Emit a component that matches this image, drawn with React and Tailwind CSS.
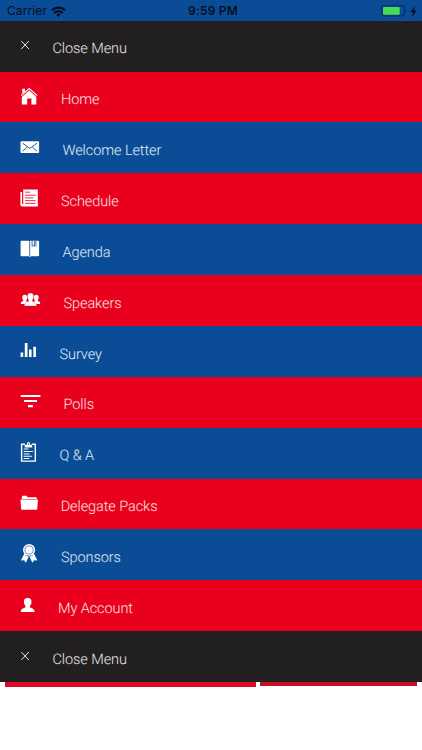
const icons = {
  close: (
    <path d="M1.3 8l7.6 8M8.9 8l-7.6 8" fill="none" stroke="currentColor" strokeWidth="0.9" />
  ),
  home: (
    <>
      <path d="M2.2 4.8h2.9v2.6L2.2 9.8z" />
      <path d="M1.2 11.6L9.2 4.6l8 7" fill="none" stroke="currentColor" strokeWidth="1.2" />
      <path d="M1.8 12.9l7.4-6.4 7.1 6.2v7.8h-4.9v-6H7.2v6H1.8z" />
    </>
  ),
  mail: (
    <>
      <rect x="0.5" y="6.2" width="18.6" height="11.8" rx="0.8" />
      <path d="M2.6 8.2l7.2 5.2L17 8.2M2.6 16.2l4.6-4M17 16.2l-4.6-4" fill="none" stroke="#0a4d96" strokeWidth="0.9" />
    </>
  ),
  schedule: (
    <>
      <path d="M3.2 3.5h14.6v16.9H2.2c-1 0-1.8-.7-1.8-1.7V6h1.7v12h1.1z" />
      <path d="M5 6.2h5.2M5 9.2h10.6M5 11.9h8.4M5 14.6h10.6M5 17.4h10.6" stroke="#e8001c" strokeWidth="0.8" />
    </>
  ),
  agenda: (
    <>
      <path d="M1.5 3.8h7.2l1 .7.9-.7h7.6c.5 0 .9.4.9.9v13.6c0 .5-.4.9-.9.9h-7.4l-1 1-1-1H1.5c-.5 0-.9-.4-.9-.9V4.7c0-.5.4-.9.9-.9z" />
      <path d="M9.7 4.6v14.8M12.1 3.8v5.6l1.3-1.1 1.2 1.1V3.8M15.9 3.8v5.4" fill="none" stroke="#0a4d96" strokeWidth="0.8" />
    </>
  ),
  speakers: (
    <>
      <path d="M4.7 6.8c1.8 0 2.6 1.2 2.5 2.9-.1 1.3-.5 2.1-1 2.6v1l1.2.8-1.3 1.9H.8c0-1.8.4-2.2 2.4-2.9v-.9c-.6-.6-.9-1.4-.9-2.6-.1-1.6.7-2.800 2.400-2.800z" />
      <path d="M16.3 6.8c-1.8 0-2.6 1.2-2.5 2.9.1 1.3.5 2.1 1 2.6v1l-1.2.8 1.3 1.9h5.300c0-1.800-.4-2.200-2.400-2.900v-.9c.6-.6.9-1.400.9-2.600.1-1.600-.7-2.800-2.400-2.800z" />
      <path d="M10.5 5c2.3 0 3.4 1.4 3.2 3.700-.1 1.400-.6 2.400-1.200 3v1.600c2.600.8 4 1.400 4.200 4.700H4.300c.2-3.300 1.600-3.900 4.200-4.700v-1.600c-.6-.6-1.100-1.600-1.200-3-.2-2.300.9-3.700 3.200-3.700z" stroke="#e8001c" strokeWidth="0.3" />
    </>
  ),
  survey: (
    <path d="M0.6 14.5h2.6v4.6H0.6zM4.8 5h2.7v14.1H4.8zM9 11.5h2.6v7.6H9zM13.3 8.8H16v10.3h-2.7z" />
  ),
  polls: (
    <path d="M0.8 6h19.6v2.1H0.8zM4 11h13v2H4zM8 16.1h4.9v2.2H8z" />
  ),
  qa: (
    <>
      <path d="M5.2 4.3H1.6v16.8h13.7V4.3h-3.6" fill="none" stroke="currentColor" strokeWidth="1.4" />
      <path d="M4.7 7.4V5h1.8c.4-.7.6-1 .6-1.5C7.1 2.7 7.7 2 8.5 2s1.4.7 1.4 1.5c0 .5.2.8.6 1.5h1.7v2.4z" />
      <path d="M3.7 9h4.7M3.7 11.5h9.2M3.7 14h5.8M3.7 16.3h8.4M3.7 18.5h5.5" stroke="currentColor" strokeWidth="1.1" />
      <circle cx="8.5" cy="4" r="0.7" fill="#0a4d96" />
    </>
  ),
  folder: (
    <>
      <path d="M1.9 8V5.7c0-.5.4-.9.9-.9h3.7l1.2 1.4h8.2c.5 0 .9.4.9.9V8z" />
      <path d="M0.5 8.6h17.4l-.6 9.2c0 .6-.4 1-1 1H2.1c-.6 0-1-.4-1-1z" />
    </>
  ),
  ribbon: (
    <>
      <path d="M4.3 11.5L0.9 18.5l3.1-.2 1.9 2.5 2.9-6.3zM13.8 11.5l3.6 7-3.2-.2-1.9 2.5-2.9-6.3z" />
      <circle cx="9.1" cy="8" r="6.1" />
      <circle cx="9.1" cy="8" r="4.1" fill="none" stroke="#0a4d96" strokeWidth="0.6" />
      <path d="M5.2 13.1c2.4 1.5 5.4 1.5 7.8 0" fill="none" stroke="#0a4d96" strokeWidth="0.5" />
    </>
  ),
  account: (
    <path d="M7.7 5.1c2.7 0 4 1.5 3.8 4-.1 1.7-.7 3-1.5 3.8v1.5c2.7 1 4.5 1.2 4.6 4.7H.8c.1-3.5 1.9-3.7 4.6-4.7v-1.5c-.8-.8-1.4-2.1-1.5-3.8-.2-2.5 1.1-4 3.8-4z" />
  ),
};

const menuItems = [
  { icon: "close", label: "Close Menu", bg: "bg-[#211f20]", indent: "pl-[8.5px]" },
  { icon: "home", label: "Home", bg: "bg-[#e8001c]", indent: "pl-[17px]" },
  { icon: "mail", label: "Welcome Letter", bg: "bg-[#0a4d96]", indent: "pl-[18.5px]" },
  { icon: "schedule", label: "Schedule", bg: "bg-[#e8001c]", indent: "pl-[17px]" },
  { icon: "agenda", label: "Agenda", bg: "bg-[#0a4d96]", indent: "pl-[18.5px]" },
  { icon: "speakers", label: "Speakers", bg: "bg-[#e8001c]", indent: "pl-[19.5px]" },
  { icon: "survey", label: "Survey", bg: "bg-[#0a4d96]", indent: "pl-[15.5px]" },
  { icon: "polls", label: "Polls", bg: "bg-[#e8001c]", indent: "pl-[19.5px]" },
  { icon: "qa", label: "Q & A", bg: "bg-[#0a4d96]", indent: "pl-[15.5px]" },
  { icon: "folder", label: "Delegate Packs", bg: "bg-[#e8001c]", indent: "pl-[16.7px]" },
  { icon: "ribbon", label: "Sponsors", bg: "bg-[#0a4d96]", indent: "pl-[17px]" },
  { icon: "account", label: "My Account", bg: "bg-[#e8001c]", indent: "pl-[14px]" },
  { icon: "close", label: "Close Menu", bg: "bg-[#211f20]", indent: "pl-[8.5px]" },
];

const StatusBar = () => {
  return (
    <header className="grid h-[20.7px] grid-cols-3 items-center bg-[#0a4d96] pl-[7px] pr-[5px] pt-px font-['Inter',sans-serif] text-[#040d1f]">
      <div className="flex items-center gap-1">
        <span className="text-[12px] leading-5 tracking-[0.1px]">Carrier</span>
        <svg width="15" height="11" viewBox="0 0 15 11" fill="none" stroke="currentColor" strokeWidth="2.2">
          <path d="M1 4.2c3.7-3.5 9.3-3.5 13 0" />
          <path d="M3.3 6.9c2.4-2.2 6-2.2 8.4 0" />
          <path d="M5.3 8.6c1.3-1 3.1-1 4.4 0L7.5 10.9z" fill="currentColor" stroke="none" />
        </svg>
      </div>
      <span className="pl-0.5 text-center text-[12px] font-semibold leading-5 tracking-[0.2px]">9:59 PM</span>
      <div className="flex items-center justify-end gap-[3px]">
        <svg width="26" height="12" viewBox="0 0 26 12">
          <rect x="0.7" y="0.7" width="22.6" height="10.2" rx="2.5" fill="none" stroke="#092f60" strokeWidth="1.1" />
          <rect x="2" y="2" width="16.7" height="7.8" rx="1" fill="#45db5b" />
          <path d="M24.3 4c1.5.6 1.5 3.1 0 3.7z" fill="#092f60" />
        </svg>
        <svg width="7" height="11" viewBox="0 0 7 11" fill="currentColor">
          <path d="M4.7 0L0.5 6.2h2.6L2.2 11l4.3-6.4H3.9z" />
        </svg>
      </div>
    </header>
  );
};

const MenuItem = ({ item }) => {
  return (
    <button className={`flex h-[50.88px] w-full shrink-0 items-start pl-5 text-left text-white ${item.bg}`}>
      <svg width="24" height="24" viewBox="0 0 24 24" fill="currentColor" className="mt-[12.5px] shrink-0">
        {icons[item.icon]}
      </svg>
      <span className={`mt-[18.6px] whitespace-nowrap text-[14.5px] font-light leading-5 tracking-[-0.08px] text-white/90 [text-rendering:geometricPrecision] ${item.indent}`}>
        {item.label}
      </span>
    </button>
  );
};

const App = () => {
  return (
    <div className="flex h-[750px] w-[422px] flex-col overflow-hidden bg-white font-['Roboto',sans-serif]">
      <StatusBar />
      <nav className="flex flex-col">
        {menuItems.map((item, index) => (
          <MenuItem key={index} item={item} />
        ))}
      </nav>
      <div className="flex items-start gap-1 pl-[5px]">
        <div className="h-[4.5px] w-[251px] bg-[#df0b24]" />
        <div className="h-[3.5px] w-[157px] bg-[#c80d22]" />
      </div>
    </div>
  );
};

export default App;
